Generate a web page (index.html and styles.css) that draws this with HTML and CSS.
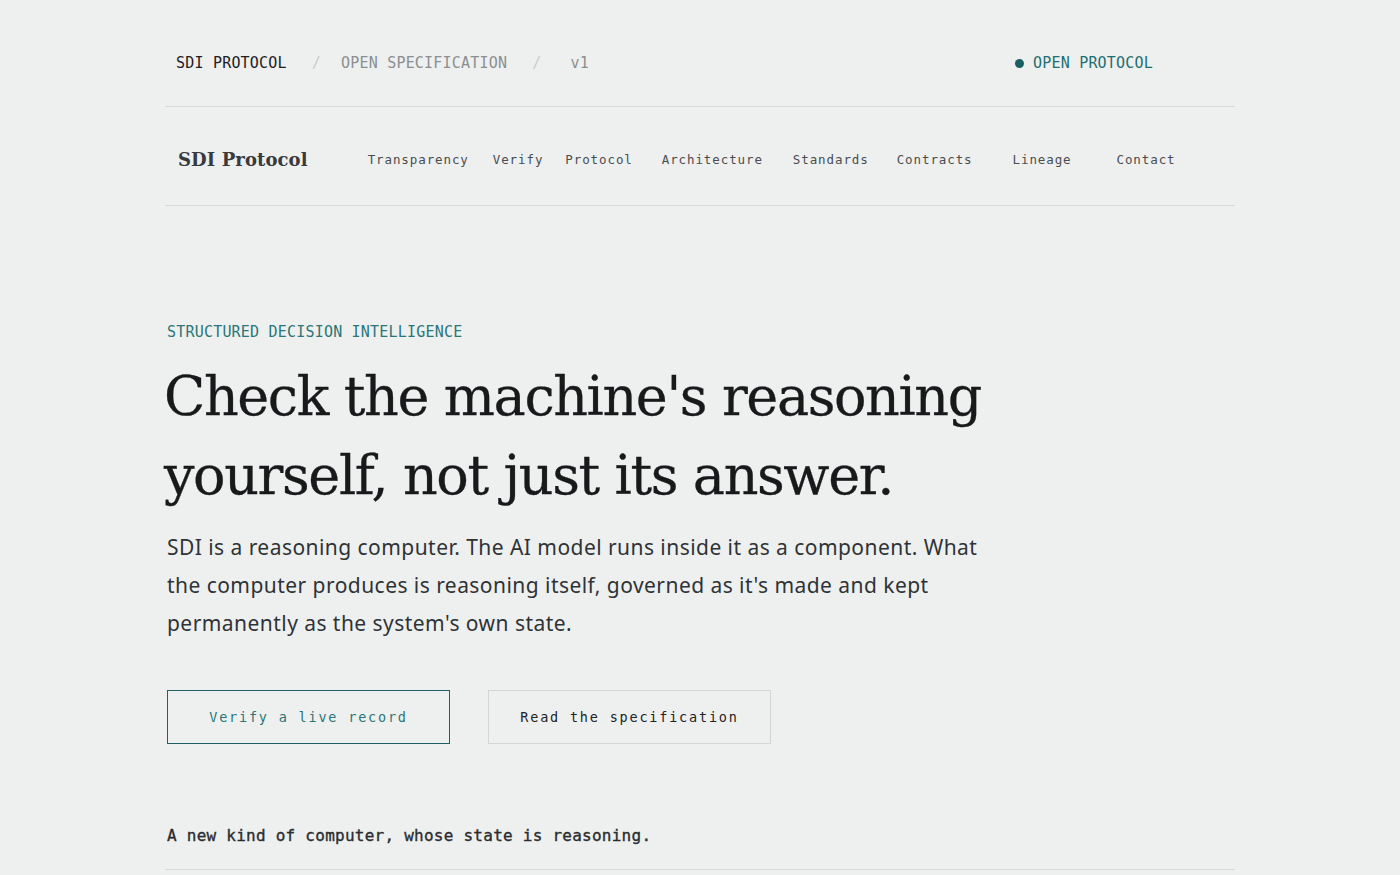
FILE: index.html
```html
<!DOCTYPE html>
<html lang="en">
<head>
<meta charset="utf-8">
<title>SDI Protocol</title>
<link rel="stylesheet" href="styles.css">
</head>
<body>
<div class="page">
  <header class="topbar">
    <div class="crumbs">
      <span class="crumb-main">SDI PROTOCOL</span>
      <span class="sep">/</span>
      <span class="crumb">OPEN SPECIFICATION</span>
      <span class="sep">/</span>
      <span class="crumb crumb-ver">v1</span>
    </div>
    <div class="status"><span class="dot"></span>OPEN PROTOCOL</div>
  </header>
  <nav class="nav">
    <a class="logo" href="#">SDI Protocol</a>
    <ul class="nav-links">
      <li><a href="#">Transparency</a></li>
      <li><a href="#">Verify</a></li>
      <li><a href="#">Protocol</a></li>
      <li><a href="#">Architecture</a></li>
      <li><a href="#">Standards</a></li>
      <li><a href="#">Contracts</a></li>
      <li><a href="#">Lineage</a></li>
      <li><a href="#">Contact</a></li>
    </ul>
  </nav>
  <main class="hero">
    <p class="eyebrow">STRUCTURED DECISION INTELLIGENCE</p>
    <h1 class="title">Check the machine's reasoning yourself, not just its answer.</h1>
    <p class="lede">SDI is a reasoning computer. The AI model runs inside it as a component. What the computer produces is reasoning itself, governed as it's made and kept permanently as the system's own state.</p>
    <div class="actions">
      <a class="btn btn-primary" href="#">Verify a live record</a>
      <a class="btn btn-secondary" href="#">Read the specification</a>
    </div>
    <p class="tagline">A new kind of computer, whose state is reasoning.</p>
  </main>
</div>
</body>
</html>
```
FILE: styles.css
```css
* { box-sizing: border-box; }
html, body { margin: 0; padding: 0; }
body {
  background: #eef0ef;
  color: #1b1d1f;
  font-family: "Noto Sans", sans-serif;
}
a { text-decoration: none; color: inherit; }
.page {
  width: 1070px;
  margin: 0 auto;
}
.topbar {
  display: flex;
  justify-content: space-between;
  align-items: center;
  padding: 53px 82px 33px 11px;
  border-bottom: 1px solid #d6d9d8;
  font-family: "DejaVu Sans Mono", monospace;
  font-size: 15px;
  line-height: 20px;
  letter-spacing: 0.2px;
}
.crumbs { display: flex; align-items: center; }
.crumb-main { color: #1e2022; }
.crumb { color: #8b8f90; }
.crumb-ver { margin-left: 9px; }
.sep { color: #c9cccc; margin: 0 20px 0 25px; }
.status {
  display: flex;
  align-items: center;
  color: #1f6f72;
}
.dot {
  width: 9px;
  height: 9px;
  border-radius: 50%;
  background: #1a5f63;
  margin-right: 9px;
}
.nav {
  display: flex;
  align-items: center;
  padding: 43px 13px 35px 13px;
  border-bottom: 1px solid #d6d9d8;
  line-height: 20px;
}
.logo {
  font-family: "DejaVu Serif", serif;
  font-weight: bold;
  font-size: 18px;
  color: #383a3c;
  letter-spacing: 0.1px;
}
.nav-links {
  list-style: none;
  display: flex;
  margin: 0 0 0 60px;
  padding: 0;
  font-family: "DejaVu Sans Mono", monospace;
  font-size: 12.5px;
  letter-spacing: 0.9px;
  color: #4a4d50;
}
.nav-links li:nth-child(2) { margin-left: 24px; }
.nav-links li:nth-child(3) { margin-left: 22px; }
.nav-links li:nth-child(4) { margin-left: 29px; }
.nav-links li:nth-child(5) { margin-left: 30px; }
.nav-links li:nth-child(6) { margin-left: 28px; }
.nav-links li:nth-child(7) { margin-left: 40px; }
.nav-links li:nth-child(8) { margin-left: 45px; }
.hero {
  padding: 116px 0 21px 2px;
  border-bottom: 1px solid #d6d9d8;
}
.eyebrow {
  margin: 0;
  font-family: "DejaVu Sans Mono", monospace;
  font-size: 15px;
  line-height: 20px;
  letter-spacing: 0.2px;
  color: #2a7678;
}
.title {
  margin: 15px 0 0 -3px;
  max-width: 960px;
  font-family: "DejaVu Serif", serif;
  font-weight: normal;
  font-size: 54px;
  line-height: 79px;
  letter-spacing: -1.4px;
  -webkit-text-stroke: 0.3px #18191b;
  color: #18191b;
}
.lede {
  margin: 13px 0 0;
  max-width: 830px;
  font-size: 21px;
  line-height: 38px;
  letter-spacing: 0.45px;
  color: #2f3336;
}
.actions {
  display: flex;
  gap: 38px;
  margin-top: 48px;
}
.btn {
  display: flex;
  align-items: center;
  justify-content: center;
  width: 283px;
  height: 54px;
  font-family: "DejaVu Sans Mono", monospace;
  font-size: 13.5px;
  letter-spacing: 1.8px;
}
.btn-primary {
  border: 1.5px solid #1f6063;
  color: #2a7678;
}
.btn-secondary {
  border: 1px solid #d3d6d6;
  color: #222426;
}
.tagline {
  margin: 80px 0 0;
  font-family: "DejaVu Sans Mono", monospace;
  font-size: 16px;
  line-height: 24px;
  letter-spacing: 0.25px;
  -webkit-text-stroke: 0.35px #2a2d30;
  color: #2a2d30;
}
```
